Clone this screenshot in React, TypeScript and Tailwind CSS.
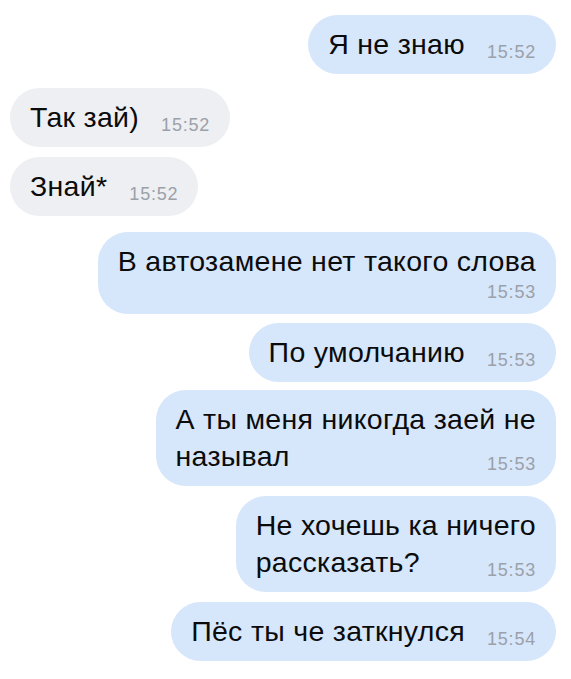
import React from "react";

type Msg = {
  out: boolean;
  lines: string[];
  time: string;
  timeOwnLine?: boolean;
  gapBefore: string;
};

const msgs: Msg[] = [
  { out: true, lines: ["Я не знаю"], time: "15:52", gapBefore: "mt-0" },
  { out: false, lines: ["Так зай)"], time: "15:52", gapBefore: "mt-[14px]" },
  { out: false, lines: ["Знай*"], time: "15:52", gapBefore: "mt-[10px]" },
  { out: true, lines: ["В автозамене нет такого слова"], time: "15:53", timeOwnLine: true, gapBefore: "mt-[16px]" },
  { out: true, lines: ["По умолчанию"], time: "15:53", gapBefore: "mt-[9px]" },
  { out: true, lines: ["А ты меня никогда заей не", "называл"], time: "15:53", gapBefore: "mt-[8px]" },
  { out: true, lines: ["Не хочешь ка ничего", "рассказать?"], time: "15:53", gapBefore: "mt-[10px]" },
  { out: true, lines: ["Пёс ты че заткнулся"], time: "15:54", gapBefore: "mt-[10px]" },
];

function Time({ t }: { t: string }) {
  return (
    <span className="block text-[18px] leading-[20px] text-[#9ba1a9] tracking-[0.8px] whitespace-nowrap">
      {t}
    </span>
  );
}

function Bubble({ m }: { m: Msg }) {
  const last = m.lines.length - 1;
  return (
    <div
      className={`${m.gapBefore} flex ${m.out ? "justify-end pr-[15px]" : "justify-start pl-[10px]"}`}
    >
      <div
        className={`${m.out ? "bg-[#d6e6fb]" : "bg-[#eeeff2]"} rounded-[30px] px-[20px] py-[11px] flex flex-col text-[28.5px] leading-[37px] tracking-[0.3px] text-[#0b0b0b] whitespace-nowrap`}
      >
        {m.lines.map((l, i) =>
          i === last && !m.timeOwnLine ? (
            <div key={i} className="flex items-end justify-between gap-[22px] h-[37px]">
              <span>{l}</span>
              <span className="block leading-[20px] pb-[1px]">
                <Time t={m.time} />
              </span>
            </div>
          ) : (
            <div key={i} className="h-[37px]">{l}</div>
          )
        )}
        {m.timeOwnLine && (
          <div className="flex justify-end items-center h-[23px]">
            <Time t={m.time} />
          </div>
        )}
      </div>
    </div>
  );
}

export default function App() {
  return (
    <div
      className="w-[571px] h-[679px] bg-white pt-[15px] overflow-hidden"
      style={{ fontFamily: '"Liberation Sans", Arial, sans-serif' }}
    >
      {msgs.map((m, i) => (
        <Bubble key={i} m={m} />
      ))}
    </div>
  );
}
